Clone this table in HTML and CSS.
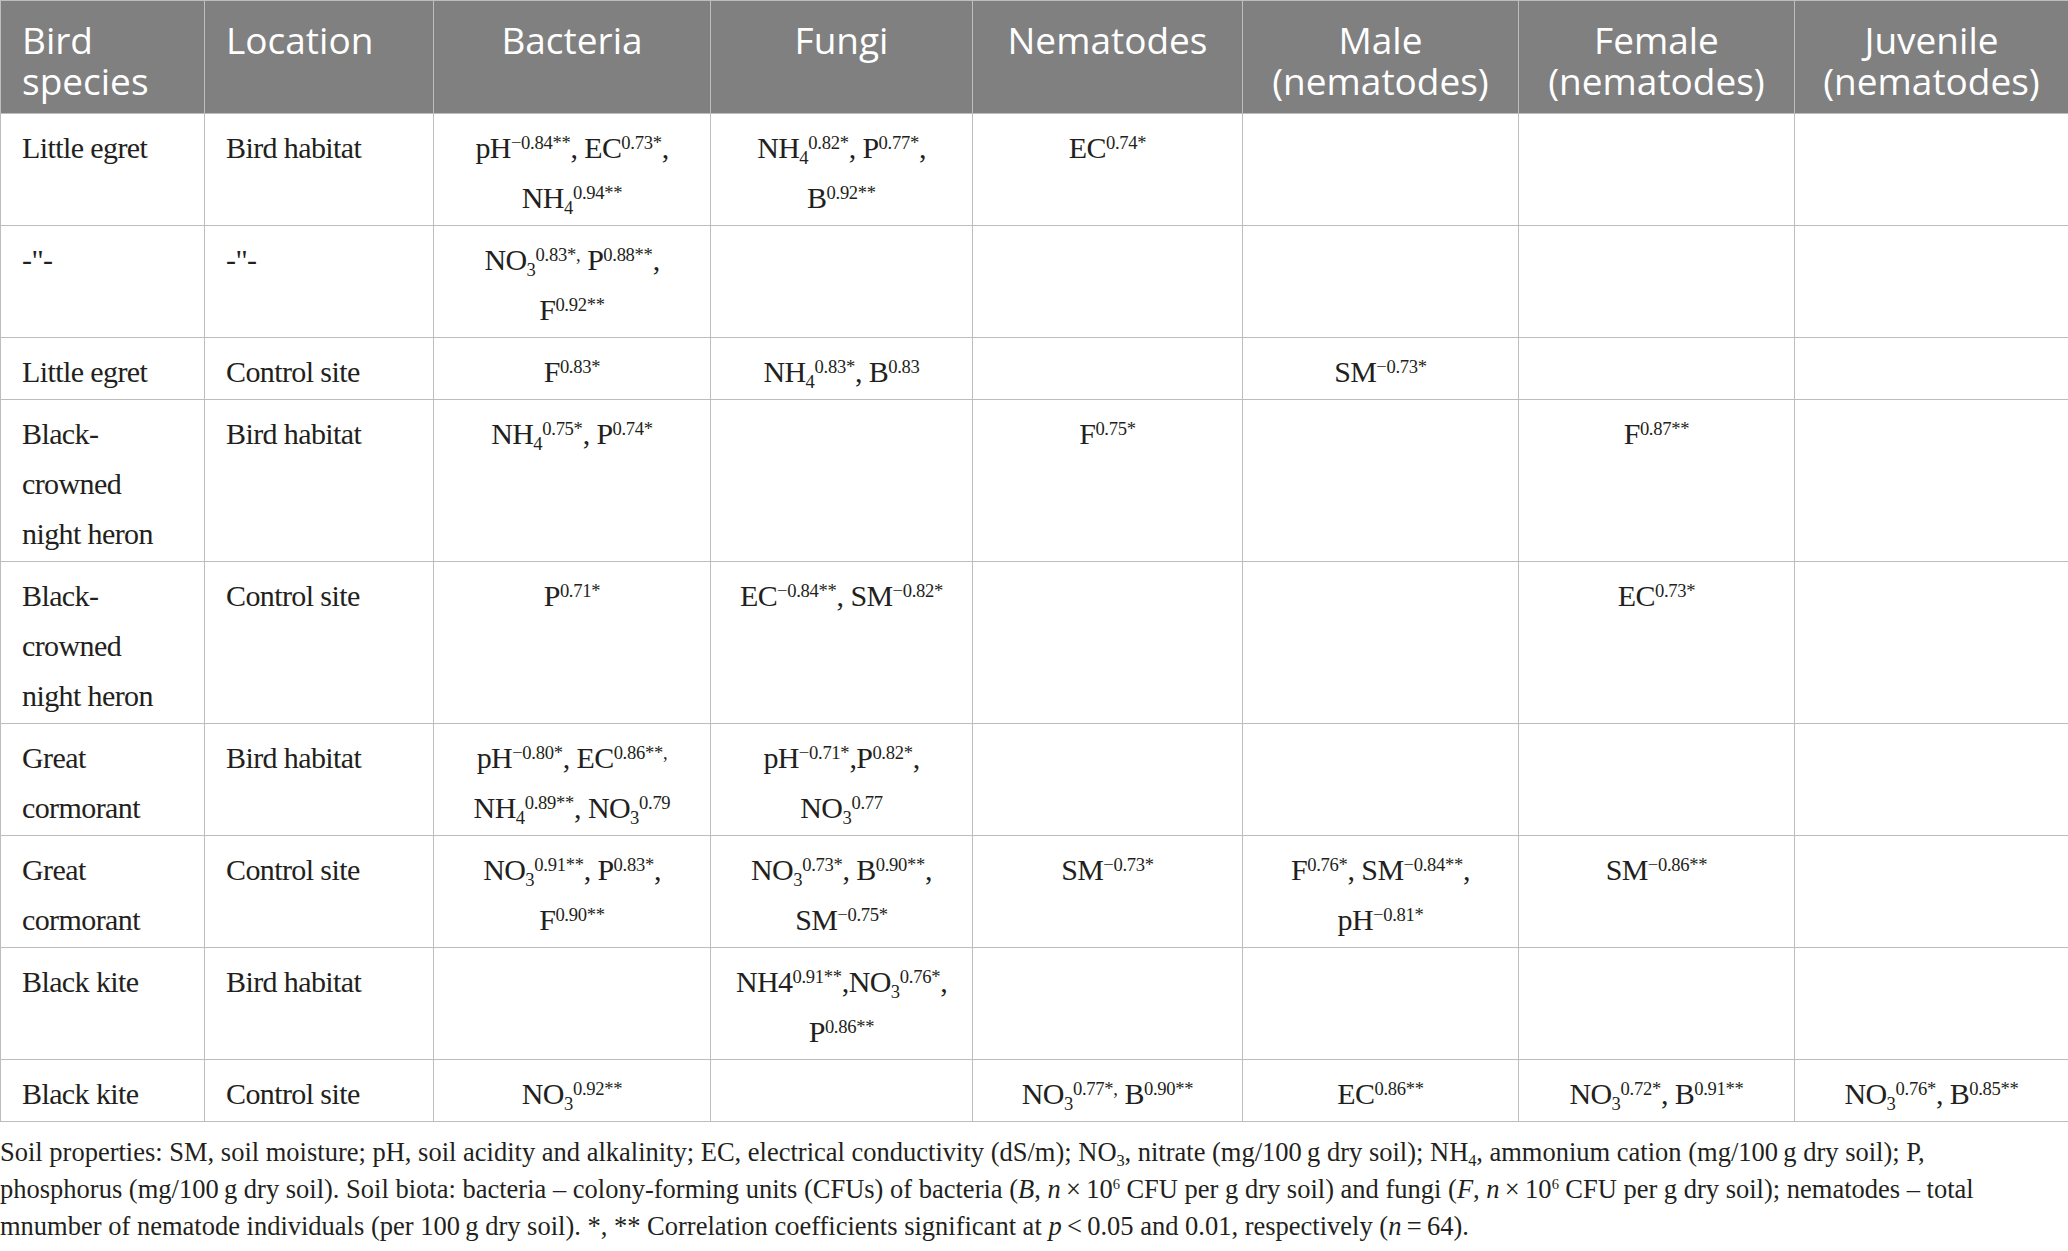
FILE: index.html
```html
<!DOCTYPE html>
<html lang="en">
<head>
    <meta charset="UTF-8">
    <meta name="viewport" content="width=device-width, initial-scale=1.0">
    <title>Soil properties and soil biota correlations</title>
    <link rel="stylesheet" href="styles.css">
</head>
<body>

    <table class="data-table">
        <colgroup>
            <col class="col-species">
            <col class="col-location">
            <col class="col-bacteria">
            <col class="col-fungi">
            <col class="col-nema">
            <col class="col-male">
            <col class="col-female">
            <col class="col-juv">
        </colgroup>
        <thead>
            <tr>
                <th class="left">Bird species</th>
                <th class="left">Location</th>
                <th>Bacteria</th>
                <th>Fungi</th>
                <th>Nematodes</th>
                <th>Male (nematodes)</th>
                <th>Female (nematodes)</th>
                <th>Juvenile (nematodes)</th>
            </tr>
        </thead>
        <tbody>
            <tr>
                <td class="left">Little egret</td>
                <td class="left">Bird habitat</td>
                <td>pH<sup>−0.84**</sup>, EC<sup>0.73*</sup>,<br>NH<sub>4</sub><sup>0.94**</sup></td>
                <td>NH<sub>4</sub><sup>0.82*</sup>, P<sup>0.77*</sup>,<br>B<sup>0.92**</sup></td>
                <td>EC<sup>0.74*</sup></td>
                <td></td>
                <td></td>
                <td></td>
            </tr>
            <tr>
                <td class="left">-"-</td>
                <td class="left">-"-</td>
                <td>NO<sub>3</sub><sup>0.83*,</sup> P<sup>0.88**</sup>,<br>F<sup>0.92**</sup></td>
                <td></td>
                <td></td>
                <td></td>
                <td></td>
                <td></td>
            </tr>
            <tr>
                <td class="left">Little egret</td>
                <td class="left">Control site</td>
                <td>F<sup>0.83*</sup></td>
                <td>NH<sub>4</sub><sup>0.83*</sup>, B<sup>0.83</sup></td>
                <td></td>
                <td>SM<sup>−0.73*</sup></td>
                <td></td>
                <td></td>
            </tr>
            <tr>
                <td class="left">Black-<br>crowned<br>night heron</td>
                <td class="left">Bird habitat</td>
                <td>NH<sub>4</sub><sup>0.75*</sup>, P<sup>0.74*</sup></td>
                <td></td>
                <td>F<sup>0.75*</sup></td>
                <td></td>
                <td>F<sup>0.87**</sup></td>
                <td></td>
            </tr>
            <tr>
                <td class="left">Black-<br>crowned<br>night heron</td>
                <td class="left">Control site</td>
                <td>P<sup>0.71*</sup></td>
                <td>EC<sup>−0.84**</sup>, SM<sup>−0.82*</sup></td>
                <td></td>
                <td></td>
                <td>EC<sup>0.73*</sup></td>
                <td></td>
            </tr>
            <tr>
                <td class="left">Great<br>cormorant</td>
                <td class="left">Bird habitat</td>
                <td>pH<sup>−0.80*</sup>, EC<sup>0.86**,</sup><br>NH<sub>4</sub><sup>0.89**</sup>, NO<sub>3</sub><sup>0.79</sup></td>
                <td>pH<sup>−0.71*</sup>,P<sup>0.82*</sup>,<br>NO<sub>3</sub><sup>0.77</sup></td>
                <td></td>
                <td></td>
                <td></td>
                <td></td>
            </tr>
            <tr>
                <td class="left">Great<br>cormorant</td>
                <td class="left">Control site</td>
                <td>NO<sub>3</sub><sup>0.91**</sup>, P<sup>0.83*</sup>,<br>F<sup>0.90**</sup></td>
                <td>NO<sub>3</sub><sup>0.73*</sup>, B<sup>0.90**</sup>,<br>SM<sup>−0.75*</sup></td>
                <td>SM<sup>−0.73*</sup></td>
                <td>F<sup>0.76*</sup>, SM<sup>−0.84**</sup>,<br>pH<sup>−0.81*</sup></td>
                <td>SM<sup>−0.86**</sup></td>
                <td></td>
            </tr>
            <tr>
                <td class="left">Black kite</td>
                <td class="left">Bird habitat</td>
                <td></td>
                <td>NH4<sup>0.91**</sup>,NO<sub>3</sub><sup>0.76*</sup>,<br>P<sup>0.86**</sup></td>
                <td></td>
                <td></td>
                <td></td>
                <td></td>
            </tr>
            <tr>
                <td class="left">Black kite</td>
                <td class="left">Control site</td>
                <td>NO<sub>3</sub><sup>0.92**</sup></td>
                <td></td>
                <td>NO<sub>3</sub><sup>0.77*,</sup> B<sup>0.90**</sup></td>
                <td>EC<sup>0.86**</sup></td>
                <td>NO<sub>3</sub><sup>0.72*</sup>, B<sup>0.91**</sup></td>
                <td>NO<sub>3</sub><sup>0.76*</sup>, B<sup>0.85**</sup></td>
            </tr>
        </tbody>
    </table>

    <p class="footnote">
        Soil properties: SM, soil moisture; pH, soil acidity and alkalinity; EC, electrical conductivity (dS/m); NO<sub>3</sub>, nitrate (mg/100&thinsp;g dry soil); NH<sub>4</sub>, ammonium cation (mg/100&thinsp;g dry soil); P,<br>
        phosphorus (mg/100&thinsp;g dry soil). Soil biota: bacteria – colony-forming units (CFUs) of bacteria (<i>B</i>, <i>n</i>&thinsp;×&thinsp;10<sup>6</sup> CFU per g dry soil) and fungi (<i>F</i>, <i>n</i>&thinsp;×&thinsp;10<sup>6</sup> CFU per g dry soil); nematodes – total<br>
        mnumber of nematode individuals (per 100&thinsp;g dry soil). *, ** Correlation coefficients significant at <i>p</i>&thinsp;&lt;&thinsp;0.05 and 0.01, respectively (<i>n</i>&thinsp;=&thinsp;64).
    </p>

</body>
</html>
```

FILE: styles.css
```css
body {
    margin: 0;
    padding: 0;
    background-color: #fff;
    color: #231f20;
    font-family: "Liberation Serif", "Times New Roman", serif;
}

.data-table {
    width: 2068px;
    border-collapse: collapse;
    table-layout: fixed;
}

.col-species { width: 204px; }
.col-location { width: 229px; }
.col-bacteria { width: 277px; }
.col-fungi { width: 262px; }
.col-nema { width: 270px; }
.col-male { width: 276px; }
.col-female { width: 276px; }
.col-juv { width: 274px; }

.data-table th,
.data-table td {
    border: 1px solid #bdbdbd;
    padding: 9px 21px 2px;
    vertical-align: top;
    text-align: center;
}

.data-table th {
    background-color: #7f807f;
    color: #fff;
    font-family: "Open Sans", "Liberation Sans", sans-serif;
    font-weight: 400;
    font-size: 37px;
    line-height: 41px;
    padding-top: 18px;
    padding-bottom: 12px;
}

.data-table td {
    font-size: 30px;
    line-height: 50px;
    letter-spacing: -0.6px;
    height: 50px;
}

.data-table .left {
    text-align: left;
}

sup,
sub {
    font-size: 0.62em;
    line-height: 0;
    letter-spacing: -0.3px;
}

sup {
    vertical-align: 0.46em;
}

sub {
    vertical-align: -0.3em;
}

.footnote {
    margin: 12px 0 0;
    font-size: 26.5px;
    line-height: 37px;
}

.footnote sup {
    font-size: 0.55em;
    vertical-align: 0.6em;
}
```
